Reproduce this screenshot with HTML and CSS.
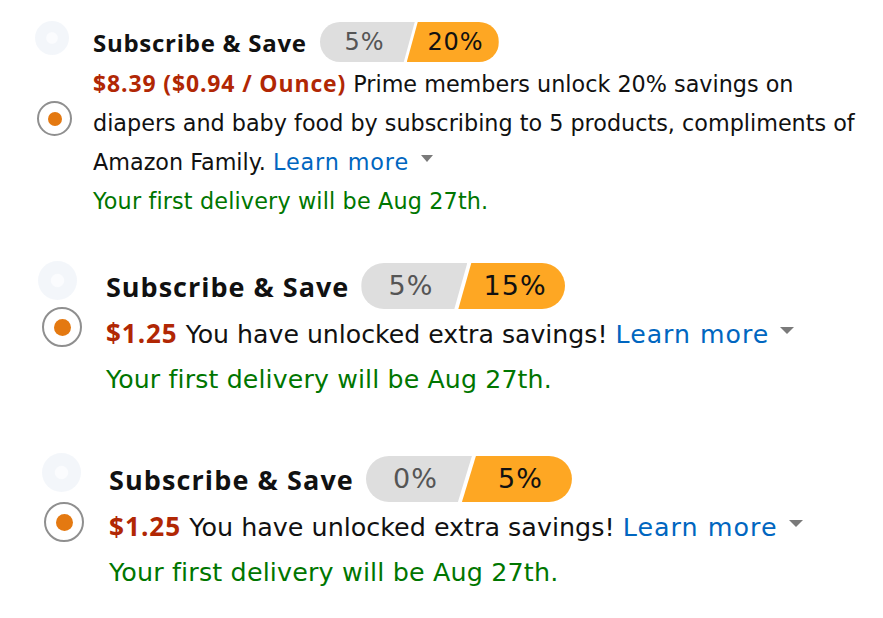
FILE: index.html
```html
<!DOCTYPE html>
<html lang="en">
<head>
<meta charset="utf-8">
<title>Subscribe &amp; Save</title>
<link rel="stylesheet" href="styles.css">
</head>
<body>
<main class="list">
  <section class="opt opt1">
    <div class="ctrl">
      <span class="ghost"></span>
      <span class="radio"><span class="dot"></span></span>
    </div>
    <div class="content">
      <div class="head">
        <span class="title">Subscribe &amp; Save</span>
        <span class="pill"><span class="off">5%</span><span class="on">20%</span></span>
      </div>
      <p class="text"><span class="price">$8.39 ($0.94 / Ounce)</span> Prime members unlock 20% savings on diapers and baby food by subscribing to 5 products, compliments of Amazon Family. <a class="link" href="#">Learn more</a><span class="caret"></span></p>
      <p class="ship">Your first delivery will be Aug 27th.</p>
    </div>
  </section>

  <section class="opt opt2">
    <div class="ctrl">
      <span class="ghost"></span>
      <span class="radio"><span class="dot"></span></span>
    </div>
    <div class="content">
      <div class="head">
        <span class="title">Subscribe &amp; Save</span>
        <span class="pill"><span class="off">5%</span><span class="on">15%</span></span>
      </div>
      <p class="text"><span class="price">$1.25</span> You have unlocked extra savings! <a class="link" href="#">Learn more</a><span class="caret"></span></p>
      <p class="ship">Your first delivery will be Aug 27th.</p>
    </div>
  </section>

  <section class="opt opt3">
    <div class="ctrl">
      <span class="ghost"></span>
      <span class="radio"><span class="dot"></span></span>
    </div>
    <div class="content">
      <div class="head">
        <span class="title">Subscribe &amp; Save</span>
        <span class="pill"><span class="off">0%</span><span class="on">5%</span></span>
      </div>
      <p class="text"><span class="price">$1.25</span> You have unlocked extra savings! <a class="link" href="#">Learn more</a><span class="caret"></span></p>
      <p class="ship">Your first delivery will be Aug 27th.</p>
    </div>
  </section>
</main>
</body>
</html>
```
FILE: styles.css
```css
* { box-sizing: border-box; }

html, body {
  margin: 0;
  padding: 0;
  background: #ffffff;
}

body {
  font-family: "DejaVu Sans", "Noto Sans", "Liberation Sans", sans-serif;
  color: #111111;
  width: 883px;
  height: 618px;
  overflow: hidden;
}

.list {
  display: flex;
  flex-direction: column;
  padding-top: 21px;
}

.opt {
  display: flex;
  align-items: flex-start;
  padding-left: var(--left);
}

.ctrl {
  display: flex;
  flex-direction: column;
  align-items: flex-start;
  width: var(--ctrl-w);
  margin-right: var(--gap);
  flex: none;
}

.ghost {
  display: block;
  width: var(--ghost);
  height: var(--ghost);
  border-radius: 50%;
  background: radial-gradient(circle, #fbfcfe 0 22%, #f3f6fa 26% 100%);
}

.radio {
  display: flex;
  align-items: center;
  justify-content: center;
  width: var(--radio);
  height: var(--radio);
  margin-top: var(--radio-top);
  margin-left: var(--radio-left);
  border-radius: 50%;
  border: 2px solid #8f8f8f;
  background: #fff;
}

.dot {
  width: var(--dot);
  height: var(--dot);
  border-radius: 50%;
  background: #e47911;
}

.content {
  display: flex;
  flex-direction: column;
  padding-top: var(--content-top);
}

.head {
  display: flex;
  align-items: center;
  height: var(--pill-h);
}

.title {
  font-family: "Open Sans", "Noto Sans", sans-serif;
  font-weight: 700;
  font-size: var(--fs-head);
  color: #111;
  margin-right: var(--pill-gap);
  letter-spacing: var(--ls-head);
}

.pill {
  display: flex;
  height: var(--pill-h);
  font-size: var(--fs-pill);
  line-height: var(--pill-h);
  letter-spacing: 0.04em;
}

.off {
  display: flex;
  justify-content: center;
  width: var(--off-w);
  padding-right: calc(var(--slant) / 2);
  background: #dedede;
  color: #555;
  border-radius: calc(var(--pill-h) / 2) 0 0 calc(var(--pill-h) / 2);
  clip-path: polygon(0 0, 100% 0, calc(100% - var(--slant)) 100%, 0 100%);
}

.on {
  display: flex;
  justify-content: center;
  width: var(--on-w);
  margin-left: var(--overlap);
  padding-left: calc(var(--slant) / 2);
  background: #fea723;
  color: #111;
  border-radius: 0 calc(var(--pill-h) / 2) calc(var(--pill-h) / 2) 0;
  clip-path: polygon(var(--slant) 0, 100% 0, 100% 100%, 0 100%);
}

.text,
.ship {
  margin: 0;
  font-size: var(--fs-body);
  line-height: var(--lh);
}

.text {
  margin-top: var(--text-top);
  width: var(--text-w);
}

.price {
  font-family: "Open Sans", "Noto Sans", sans-serif;
  font-size: 1.03em;
  letter-spacing: 0.038em;
  color: #b12704;
  font-weight: 700;
}

.link {
  color: #0066c0;
  text-decoration: none;
  letter-spacing: 0.04em;
}

.caret {
  display: inline-block;
  width: 0;
  height: 0;
  margin-left: var(--caret-gap);
  border-left: var(--caret-half) solid transparent;
  border-right: var(--caret-half) solid transparent;
  border-top: var(--caret-h) solid #7a7a7a;
  vertical-align: var(--caret-raise);
}

.ship {
  color: #007600;
  letter-spacing: 0.15px;
}

/* option 1 — the smaller screenshot */
.opt1 {
  --left: 35px;
  --ctrl-w: 37px;
  --gap: 21px;
  --ghost: 34px;
  --radio: 35px;
  --radio-top: 46px;
  --radio-left: 2px;
  --dot: 14px;
  --content-top: 1px;
  --pill-h: 40px;
  --fs-head: 24px;
  --ls-head: 0.73px;
  --pill-gap: 13px;
  --fs-pill: 24px;
  --off-w: 95px;
  --on-w: 92px;
  --overlap: -8px;
  --slant: 11px;
  --fs-body: 22.3px;
  --lh: 39px;
  --text-top: 2px;
  --text-w: 778px;
  --caret-gap: 12px;
  --caret-half: 6.5px;
  --caret-h: 7px;
  --caret-raise: 8px;
}

/* option 2 */
.opt2 {
  --left: 38px;
  --ctrl-w: 44px;
  --gap: 24px;
  --ghost: 39px;
  --radio: 40px;
  --radio-top: 7px;
  --radio-left: 4px;
  --dot: 17px;
  --content-top: 2px;
  --pill-h: 46px;
  --fs-head: 27px;
  --ls-head: 1px;
  --pill-gap: 12px;
  --fs-pill: 27px;
  --off-w: 106px;
  --on-w: 107px;
  --overlap: -9px;
  --slant: 13px;
  --fs-body: 25.2px;
  --lh: 45px;
  --text-top: 2px;
  --text-w: 770px;
  --caret-gap: 11px;
  --caret-half: 7px;
  --caret-h: 7px;
  --caret-raise: 9px;
  margin-top: 40px;
}

/* option 3 */
.opt3 {
  --left: 42px;
  --ctrl-w: 42px;
  --gap: 25px;
  --ghost: 39px;
  --radio: 40px;
  --radio-top: 10px;
  --radio-left: 2px;
  --dot: 17px;
  --content-top: 3px;
  --pill-h: 46px;
  --fs-head: 27px;
  --ls-head: 1.1px;
  --pill-gap: 12px;
  --fs-pill: 27px;
  --off-w: 106px;
  --on-w: 110px;
  --overlap: -10px;
  --slant: 14px;
  --fs-body: 25.4px;
  --lh: 45px;
  --text-top: 2px;
  --text-w: 770px;
  --caret-gap: 11px;
  --caret-half: 7px;
  --caret-h: 7px;
  --caret-raise: 9px;
  margin-top: 51px;
}
```
